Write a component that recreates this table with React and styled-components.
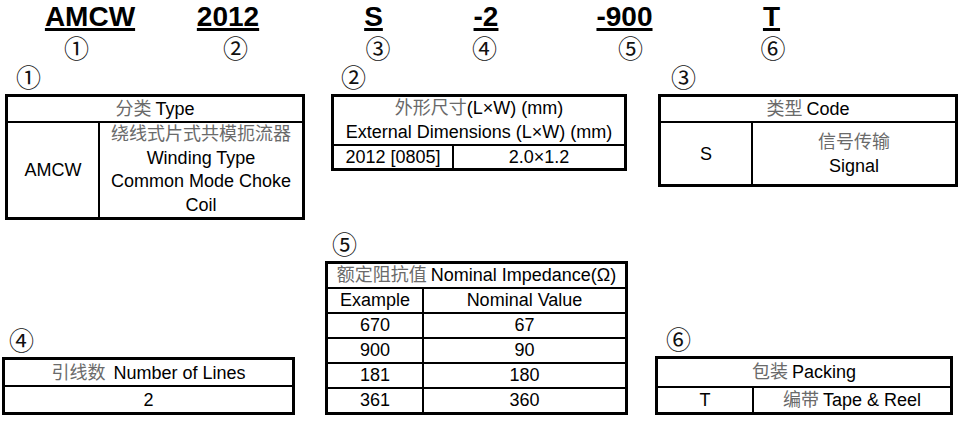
import styled, { createGlobalStyle } from "styled-components";

const GlobalStyle = createGlobalStyle`
  html, body {
    margin: 0;
    background: #fff;
  }
  body {
    font-family: "Liberation Sans", "Noto Sans CJK SC", sans-serif;
    color: #000;
  }
`;

const Page = styled.div`
  width: 965px;
  height: 424px;
  padding-top: 1px;
  box-sizing: border-box;
  overflow: hidden;
`;

// part number strip at the top: code on one grid, circled marks on another
const Strip = styled.div`
  display: grid;
  grid-template-columns: ${(p) => p.$cols};
  margin-top: ${(p) => p.$top || 0}px;
`;

const Slot = styled.div`
  display: flex;
  justify-content: center;
`;

const Code = styled.span`
  font-size: 28px;
  font-weight: 700;
  line-height: 32px;
  white-space: nowrap;
  text-decoration: underline;
  text-decoration-thickness: 3px;
  text-underline-offset: 2px;
`;

const Mark = styled.span`
  font-family: "Noto Sans CJK JP", sans-serif;
  font-size: 25px;
  line-height: 21px;
  color: #111;
`;

const Sheet = styled.div`
  display: grid;
  grid-template-columns: 320px 330px 1fr;
  row-gap: 13px;
  margin-top: 8px;
`;

const Section = styled.section`
  display: flex;
  flex-direction: column;
  gap: 7px;
  margin-left: ${(p) => p.$x}px;
  align-self: ${(p) => (p.$end ? "end" : "start")};
`;

const Label = styled(Mark)`
  display: block;
  height: 21px;
  margin-left: ${(p) => p.$indent}px;
`;

const Box = styled.div`
  width: ${(p) => p.$w}px;
  box-sizing: border-box;
  border: 3px solid #000;
  font-size: 18px;
`;

const Row = styled.div`
  display: grid;
  grid-template-columns: ${(p) => p.$cols || "1fr"};
  height: ${(p) => p.$h}px;

  & + & {
    border-top: 2px solid #000;
  }
`;

const Cell = styled.div`
  display: flex;
  flex-direction: column;
  justify-content: center;
  align-items: center;
  min-width: 0;

  & + & {
    border-left: 2px solid #000;
  }
`;

const Line = styled.div`
  height: ${(p) => p.$lh || 24}px;
  line-height: ${(p) => p.$lh || 24}px;
  white-space: pre;
`;

const Zh = styled.span`
  font-family: "Noto Sans CJK SC", sans-serif;
  line-height: 1;
  color: #6a6a6a;
`;

const codes = [
  ["AMCW", 180],
  ["2012", 96],
  ["S", 195],
  ["-2", 30],
  ["-900", 247],
  ["T", 47],
];

const marks = [
  ["①", 153],
  ["②", 165],
  ["③", 120],
  ["④", 93],
  ["⑤", 199],
  ["⑥", 86],
];

const impedance = [
  ["670", "67"],
  ["900", "90"],
  ["181", "180"],
  ["361", "360"],
];

function Text({ zh, en, lh }) {
  return (
    <Line $lh={lh}>
      {zh && <Zh>{zh}</Zh>}
      {en}
    </Line>
  );
}

function App() {
  return (
    <>
      <GlobalStyle />
      <Page>
        <Strip $cols={codes.map((c) => c[1] + "px").join(" ")}>
          {codes.map(([text]) => (
            <Slot key={text}>
              <Code>{text}</Code>
            </Slot>
          ))}
        </Strip>
        <Strip $top={4} $cols={marks.map((m) => m[1] + "px").join(" ")}>
          {marks.map(([glyph]) => (
            <Slot key={glyph}>
              <Mark>{glyph}</Mark>
            </Slot>
          ))}
        </Strip>

        <Sheet>
          <Section $x={5}>
            <Label $indent={11}>①</Label>
            <Box $w={300}>
              <Row $h={24}>
                <Cell>
                  <Text zh="分类 " en="Type" />
                </Cell>
              </Row>
              <Row $h={94} $cols="90px 1fr">
                <Cell>
                  <Text en="AMCW" />
                </Cell>
                <Cell>
                  <Text lh={23.5} zh="绕线式片式共模扼流器" />
                  <Text lh={23.5} en="Winding Type" />
                  <Text lh={23.5} en="Common Mode Choke" />
                  <Text lh={23.5} en="Coil" />
                </Cell>
              </Row>
            </Box>
          </Section>

          <Section $x={11}>
            <Label $indent={10}>②</Label>
            <Box $w={296}>
              <Row $h={47}>
                <Cell>
                  <Text lh={23.5} zh="外形尺寸" en="(L×W) (mm)" />
                  <Text lh={23.5} en="External Dimensions (L×W) (mm)" />
                </Cell>
              </Row>
              <Row $h={22} $cols="118px 1fr">
                <Cell>
                  <Text lh={22} en="2012 [0805]" />
                </Cell>
                <Cell>
                  <Text lh={22} en="2.0×1.2" />
                </Cell>
              </Row>
            </Box>
          </Section>

          <Section $x={8}>
            <Label $indent={13}>③</Label>
            <Box $w={300}>
              <Row $h={24}>
                <Cell>
                  <Text zh="类型 " en="Code" />
                </Cell>
              </Row>
              <Row $h={61} $cols="90px 1fr">
                <Cell>
                  <Text en="S" />
                </Cell>
                <Cell>
                  <Text zh="信号传输" />
                  <Text en="Signal" />
                </Cell>
              </Row>
            </Box>
          </Section>

          <Section $x={2} $end>
            <Label $indent={7}>④</Label>
            <Box $w={293}>
              <Row $h={25}>
                <Cell>
                  <Text zh="引线数  " en="Number of Lines" />
                </Cell>
              </Row>
              <Row $h={25}>
                <Cell>
                  <Text en="2" />
                </Cell>
              </Row>
            </Box>
          </Section>

          <Section $x={5}>
            <Label $indent={7}>⑤</Label>
            <Box $w={303}>
              <Row $h={23}>
                <Cell>
                  <Text lh={23} zh="额定阻抗值 " en="Nominal Impedance(Ω)" />
                </Cell>
              </Row>
              <Row $h={23} $cols="94px 1fr">
                <Cell>
                  <Text lh={23} en="Example" />
                </Cell>
                <Cell>
                  <Text lh={23} en="Nominal Value" />
                </Cell>
              </Row>
              {impedance.map(([example, value]) => (
                <Row key={example} $h={23} $cols="94px 1fr">
                  <Cell>
                    <Text lh={23} en={example} />
                  </Cell>
                  <Cell>
                    <Text lh={23} en={value} />
                  </Cell>
                </Row>
              ))}
            </Box>
          </Section>

          <Section $x={5} $end>
            <Label $indent={11}>⑥</Label>
            <Box $w={298}>
              <Row $h={27}>
                <Cell>
                  <Text lh={27} zh="包装 " en="Packing" />
                </Cell>
              </Row>
              <Row $h={24} $cols="94px 1fr">
                <Cell>
                  <Text en="T" />
                </Cell>
                <Cell>
                  <Text zh="编带 " en="Tape & Reel" />
                </Cell>
              </Row>
            </Box>
          </Section>
        </Sheet>
      </Page>
    </>
  );
}

export default App;
